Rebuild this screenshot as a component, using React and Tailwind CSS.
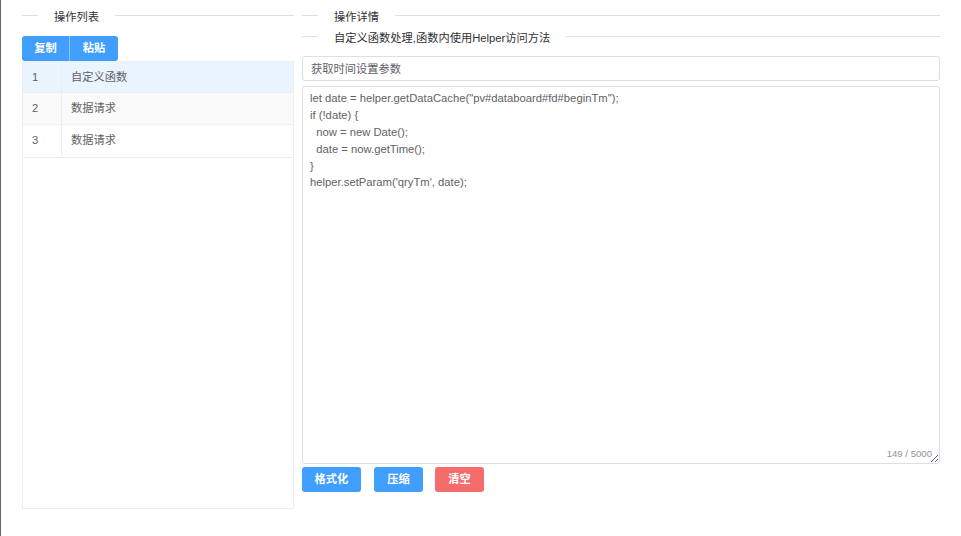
// Operation editor: step list on the left, step detail on the right.
const FONT = "font-['Liberation_Sans','Noto_Sans_CJK_SC',sans-serif]";

const CODE = `let date = helper.getDataCache("pv#databoard#fd#beginTm");
if (!date) {
  now = new Date();
  date = now.getTime();
}
helper.setParam('qryTm', date);`;

const STEPS = [
  { id: 1, name: '自定义函数', rowClass: 'h-[31px] bg-[#e9f4ff]' },
  { id: 2, name: '数据请求', rowClass: 'h-8 bg-[#fafafa]' },
  { id: 3, name: '数据请求', rowClass: 'h-[33px] pb-px bg-white' },
];

const Divider = ({ children, className = '' }) => (
  <div className={`flex items-start ${className}`}>
    <div className="mt-2 h-px w-4 bg-[#dcdfe6]" />
    <span className="mt-[2px] px-4 text-[11.25px] leading-4 whitespace-nowrap text-[#303133]">{children}</span>
    <div className="mt-2 h-px flex-1 bg-[#dcdfe6]" />
  </div>
);

const ActionButton = ({ className = '', children }) => (
  <button className={`h-[25px] rounded-[3px] text-[11.25px] font-bold text-white ${className}`}>
    {children}
  </button>
);

const App = () => (
  <div className={`flex h-[536px] w-[961px] overflow-hidden border-l border-l-[#666] bg-white pt-[7px] pr-[21px] pl-[21px] ${FONT}`}>
    {/* Step list */}
    <div className="flex w-[272px] flex-col pb-[27px]">
      <Divider className="mb-[13px] h-4">操作列表</Divider>
      <div className="flex w-24">
        <ActionButton className="w-12 rounded-r-none border-r border-r-[#8cc5ff] bg-[#409eff]">复制</ActionButton>
        <ActionButton className="w-12 rounded-l-none bg-[#409eff]">粘贴</ActionButton>
      </div>
      <div className="flex-1 border border-[#ebeef5]">
        {STEPS.map((step) => (
          <div key={step.id} className={`flex border-b border-b-[#ebeef5] text-[11.25px] text-[#606266] ${step.rowClass}`}>
            <div className="flex w-[39px] items-center border-r border-r-[#ebeef5] pl-[9px]">{step.id}</div>
            <div className="flex flex-1 items-center pl-[9px]">{step.name}</div>
          </div>
        ))}
      </div>
    </div>

    {/* Step detail */}
    <div className="ml-2 flex flex-1 flex-col">
      <Divider className="h-4">操作详情</Divider>
      <Divider className="mt-[5px] h-4">自定义函数处理,函数内使用Helper访问方法</Divider>
      <input
        readOnly
        value="获取时间设置参数"
        className="mt-[12px] h-[25px] w-full rounded-[3px] border border-[#dcdfe6] px-2 pb-[2px] text-[11.25px] text-[#606266] outline-none"
      />
      <div className="relative mt-[5px] h-[378px]">
        <textarea
          readOnly
          value={CODE}
          className="block h-full w-full resize rounded-[3px] border border-[#dcdfe6] px-[7px] py-[3px] text-[11.25px] leading-[16.875px] text-[#606266] outline-none"
        />
        <span className="absolute right-2 bottom-[5px] text-[9.6px] leading-[11px] text-[#909399]">149 / 5000</span>
      </div>
      <div className="mt-[3px] flex">
        <ActionButton className="w-[59px] bg-[#409eff]">格式化</ActionButton>
        <ActionButton className="ml-[13px] w-[49px] bg-[#409eff]">压缩</ActionButton>
        <ActionButton className="ml-3 w-[49px] bg-[#f56c6c]">清空</ActionButton>
      </div>
    </div>
  </div>
);

export default App;
